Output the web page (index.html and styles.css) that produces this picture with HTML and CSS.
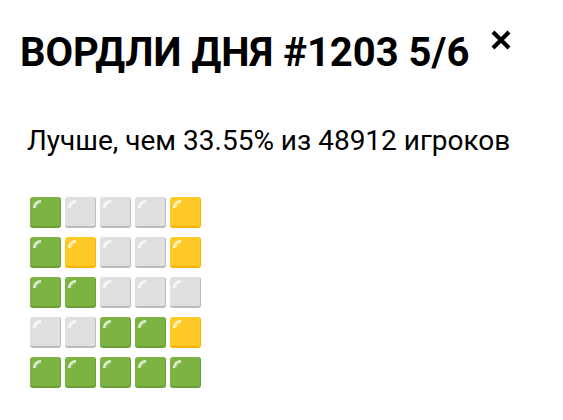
FILE: index.html
```html
<!DOCTYPE html>
<html lang="ru">
<head>
    <meta charset="UTF-8">
    <meta name="viewport" content="width=device-width, initial-scale=1.0">
    <title>Вордли дня</title>
    <link rel="stylesheet" href="styles.css">
</head>
<body>
    <div class="result">
        <div class="result-head">
            <h2>ВОРДЛИ ДНЯ #1203 5/6</h2>
            <span class="close">
                <svg width="22" height="22" viewBox="0 0 22 22">
                    <path d="M3 3 L19 19 M19 3 L3 19" stroke="#000" stroke-width="4.2" stroke-linecap="butt"/>
                </svg>
            </span>
        </div>
        <p class="stats">Лучше, чем 33.55% из 48912 игроков</p>

        <div class="board">
            <div class="row"><i class="sq green"></i><i class="sq gray"></i><i class="sq gray"></i><i class="sq gray"></i><i class="sq yellow"></i></div>
            <div class="row"><i class="sq green"></i><i class="sq yellow"></i><i class="sq gray"></i><i class="sq gray"></i><i class="sq yellow"></i></div>
            <div class="row"><i class="sq green"></i><i class="sq green"></i><i class="sq gray"></i><i class="sq gray"></i><i class="sq gray"></i></div>
            <div class="row"><i class="sq gray"></i><i class="sq gray"></i><i class="sq green"></i><i class="sq green"></i><i class="sq yellow"></i></div>
            <div class="row"><i class="sq green"></i><i class="sq green"></i><i class="sq green"></i><i class="sq green"></i><i class="sq green"></i></div>
        </div>
    </div>
</body>
</html>
```

FILE: styles.css
```css
body {
    margin: 0;
    padding: 0;
    background: #ffffff;
    font-family: Roboto, "Liberation Sans", sans-serif;
    color: #000;
}

.result {
    padding: 29px 20px 0 20px;
}

.result-head {
    display: flex;
    align-items: flex-start;
}

.result-head h2 {
    margin: 0;
    font-size: 40px;
    font-weight: bold;
    line-height: 47px;
}

.close {
    margin-left: 21px;
    margin-top: 0;
    cursor: pointer;
}

.stats {
    margin: 48px 0 0 7px;
    font-size: 28px;
    line-height: 33px;
}

.board {
    margin: 40px 0 0 10px;
}

.row {
    display: flex;
    gap: 4px;
    margin-bottom: 9px;
}

/* emoji-like tiles */
.sq {
    position: relative;
    display: block;
    width: 30px;
    height: 29px;
    border-radius: 3px;
    border-right: 1px solid;
    border-bottom: 2px solid;
    box-sizing: content-box;
}

.sq::before {
    content: '';
    position: absolute;
    top: 3px;
    left: 3px;
    width: 6px;
    height: 6px;
    border-top: 3px solid rgba(255, 255, 255, 0.8);
    border-left: 3px solid rgba(255, 255, 255, 0.8);
    border-top-left-radius: 8px 8px;
    border-top-width: 2px;
    border-left-width: 2px;
    box-shadow: inset 1px 1px 0 rgba(255, 255, 255, 0.45);
}

.green {
    background: #7cb342;
    border-color: #689f38;
}

.gray {
    background: #e0e0e0;
    border-color: #bdbdbd;
}

.yellow {
    background: #ffca28;
    border-color: #ffb300;
}
```
